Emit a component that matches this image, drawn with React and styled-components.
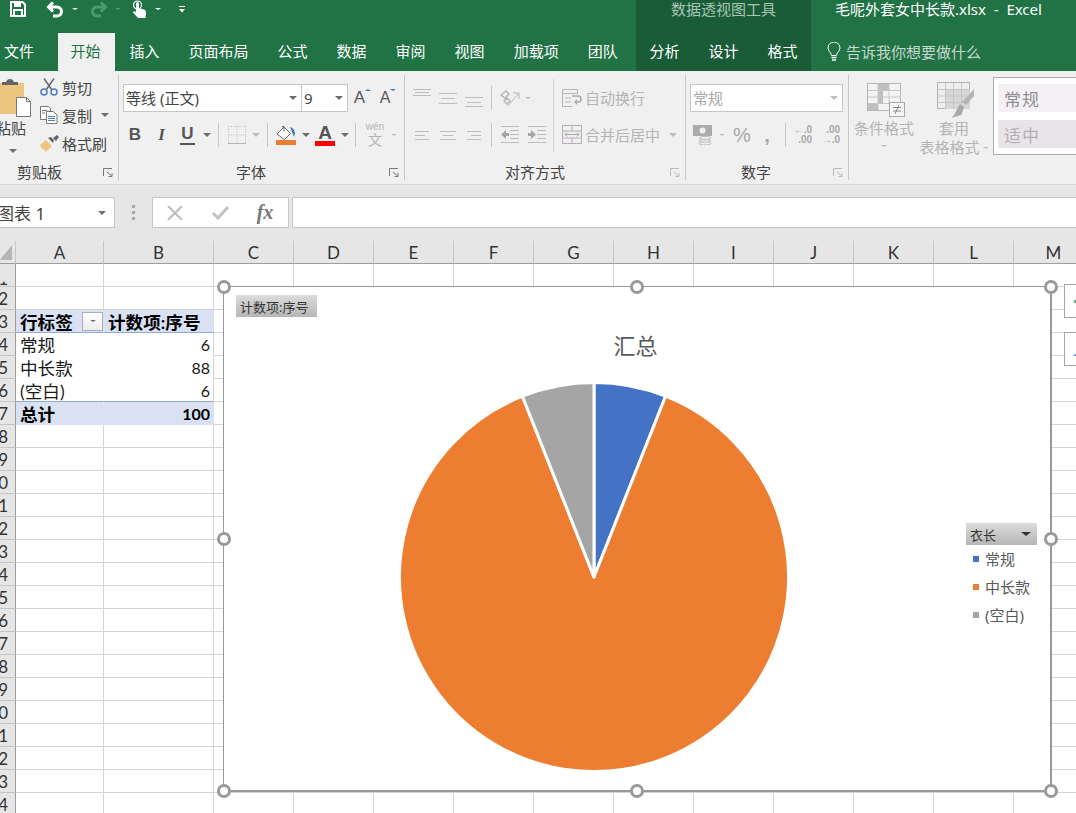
import React from 'react';
import styled, { createGlobalStyle } from 'styled-components';

const CJK = '"Noto Sans CJK SC", sans-serif';

const GlobalStyle = createGlobalStyle`
  html, body { margin: 0; padding: 0; background: #fff; }
  body { font-family: "Noto Sans", ${CJK}; }
  * { box-sizing: border-box; }
`;

const Page = styled.div`
  width: 1076px;
  height: 813px;
  overflow: hidden;
  display: flex;
  flex-direction: column;
  background: #e6e6e6;
`;

/* ---------- title bar + tabs ---------- */

const Header = styled.header`
  display: flex;
  height: 71px;
  flex: none;
  background: #217346;
  color: #fff;
`;

const HeaderLeft = styled.div`
  width: 636px;
  flex: none;
`;

const ContextBand = styled.div`
  width: 175px;
  flex: none;
  background: #1a5c38;
`;

const HeaderRight = styled.div`
  flex: 1;
  min-width: 0;
`;

const TopRow = styled.div`
  height: 33px;
  padding-bottom: 15px;
  display: flex;
  align-items: center;
  font-size: 15px;
  line-height: 18px;
  white-space: pre;
`;

const ContextLabel = styled(TopRow)`
  justify-content: center;
  color: #a9c5b5;
`;

const FileTitle = styled(TopRow)`
  padding-left: 24px;
`;

const Slot = styled.span`
  display: inline-flex;
  flex: none;
  align-items: center;
  justify-content: center;
  width: ${p => p.$w}px;
  margin-left: ${p => p.$ml || 0}px;
`;

const TabRow = styled.nav`
  height: 38px;
  display: flex;
  margin-left: ${p => p.$ml || 0}px;
`;

const Tab = styled.div`
  height: 38px;
  flex: none;
  padding: 0 14.5px 3px ${p => (p.$active ? 12.5 : 14.5)}px;
  display: flex;
  align-items: center;
  font-size: 15px;
  white-space: nowrap;
  color: ${p => (p.$active ? '#217346' : '#fff')};
  background: ${p => (p.$active ? '#f0f0f0' : 'transparent')};
`;

const FileTab = styled(Tab)`
  padding: 0 24px 3px 4px;
`;

const TellMe = styled.div`
  height: 38px;
  padding: 0 0 2px 16px;
  display: flex;
  align-items: center;
  gap: 5px;
  font-size: 15px;
  color: #c5d8cd;
`;

/* ---------- ribbon ---------- */

const Ribbon = styled.section`
  height: 114px;
  flex: none;
  display: flex;
  background: #f0f0f0;
  border-bottom: 1px solid #d6d6d6;
  color: #444;
  font-size: 15px;
  overflow: hidden;
`;

const Group = styled.div`
  width: ${p => p.$w}px;
  height: 105px;
  margin-top: 4px;
  flex: none;
  display: flex;
  flex-direction: column;
  border-right: 1px solid #c8c8c8;
`;

const GroupBody = styled.div`
  height: 89px;
  display: flex;
  padding-top: ${p => p.$top || 0}px;
`;

const GroupFooter = styled.div`
  height: 16px;
  display: flex;
  align-items: center;
  padding-left: ${p => p.$labelAt}px;
  padding-right: 5px;
  font-size: 15px;
  line-height: 16px;
  color: #444;
`;

const Launcher = styled.svg`
  width: 10px;
  height: 9px;
  margin-left: auto;
`;

const Stack = styled.div`
  display: flex;
  flex-direction: column;
  width: ${p => (p.$w ? `${p.$w}px` : 'auto')};
`;

const ToolRow = styled.div`
  height: 37px;
  display: flex;
  align-items: center;
  padding-left: ${p => p.$pad || 0}px;
`;

const Sep = styled.span`
  width: 1px;
  height: 24px;
  flex: none;
  background: #c6c6c6;
  margin-left: ${p => p.$ml}px;
  margin-right: ${p => p.$mr}px;
`;

const TallSep = styled.span`
  width: 1px;
  height: 73px;
  flex: none;
  background: #d2d2d2;
`;

const Caret = styled.span`
  display: inline-block;
  flex: none;
  width: 0;
  height: 0;
  border-left: ${p => p.$s || 4}px solid transparent;
  border-right: ${p => p.$s || 4}px solid transparent;
  border-top: ${p => (p.$s ? p.$s - 1 : 4)}px solid ${p => p.$c || '#6d6d6d'};
`;

const CaretUp = styled(Caret)`
  transform: rotate(180deg);
`;

const PasteColumn = styled.div`
  width: 36px;
  flex: none;
  overflow: hidden;
  display: flex;
  flex-direction: column;
  padding-top: 4px;
`;

const PasteLabel = styled.div`
  width: 30px;
  margin-left: -4px;
  line-height: 20px;
  white-space: nowrap;
`;

const PasteCaret = styled.div`
  padding-left: 9px;
  margin-top: 9px;
  line-height: 0;
`;

const ClipList = styled.div`
  display: flex;
  flex-direction: column;
  margin: -2px 0 0 4px;
`;

const ClipRow = styled.div`
  height: 28px;
  display: flex;
  align-items: center;
`;

const ClipIcon = styled.span`
  width: 22px;
  display: flex;
`;

const SelectBox = styled.div`
  width: ${p => p.$w}px;
  height: 28px;
  flex: none;
  display: flex;
  align-items: center;
  justify-content: space-between;
  padding: 0 ${p => p.$pr || 4}px 0 2px;
  background: #fff;
  border: 1px solid #c6c6c6;
  color: ${p => (p.$dim ? '#a6a6a6' : '#444')};
  font-size: 15px;
  white-space: nowrap;
  margin-left: ${p => p.$ml || 0}px;
`;

const SizeGlyph = styled.span`
  display: inline-flex;
  align-items: flex-start;
  font-family: "Liberation Sans", sans-serif;
  font-size: ${p => p.$size}px;
  line-height: 18px;
  color: #595959;
  gap: 0;
`;

const FormatLetter = styled.span`
  font-family: ${p => (p.$serif ? '"Liberation Serif"' : '"Liberation Sans"')}, serif;
  font-weight: 700;
  font-style: ${p => (p.$serif ? 'italic' : 'normal')};
  font-size: 17px;
  line-height: 18px;
  color: #555;
  border-bottom: ${p => (p.$under ? '2px solid #555' : 'none')};
  padding: 0 1px;
`;

const ColorStack = styled.span`
  display: flex;
  flex-direction: column;
  align-items: center;
  width: 20px;
`;

const ColorBar = styled.span`
  width: 20px;
  height: 5px;
  background: ${p => p.$c};
`;

const BigA = styled.span`
  font-family: "Liberation Sans", sans-serif;
  font-weight: 700;
  font-size: 19px;
  line-height: 17px;
  color: #555;
`;

const Phonetic = styled.span`
  display: flex;
  flex-direction: column;
  align-items: center;
  gap: 1px;
  color: #b5b5b5;
  line-height: 1;
`;

const PhoneticTop = styled.span`
  font-family: "Liberation Sans", sans-serif;
  font-size: 10px;
  line-height: 10px;
`;

const PhoneticBottom = styled.span`
  font-size: 14px;
  line-height: 14px;
`;

const DimLabel = styled.span`
  color: #b4b4b4;
  font-size: 15px;
  white-space: nowrap;
  margin-left: ${p => p.$ml || 0}px;
`;

const DimSymbol = styled.span`
  color: #a8a8a8;
  font-family: "Liberation Sans", sans-serif;
  font-weight: ${p => (p.$bold ? 700 : 400)};
  font-size: 20px;
  line-height: 20px;
`;

const DecimalStack = styled.span`
  display: flex;
  flex-direction: column;
  align-items: flex-end;
  color: #a8a8a8;
  font-family: "Liberation Sans", sans-serif;
  font-size: 10px;
  line-height: 10px;
  font-weight: 700;
`;

const StyleButton = styled.div`
  width: 70px;
  flex: none;
  display: flex;
  flex-direction: column;
  align-items: center;
  color: #b4b4b4;
  padding-top: 11px;
`;

const StyleIcon = styled.div`
  height: 36px;
  display: flex;
  align-items: flex-end;
  padding-left: ${p => p.$pl || 0}px;
`;

const StyleLine = styled.div`
  line-height: 19px;
  display: flex;
  align-items: center;
  gap: 3px;
  white-space: nowrap;
  margin-top: ${p => p.$mt || 0}px;
`;

const Gallery = styled.div`
  width: 100px;
  height: 78px;
  flex: none;
  margin: 6px 0 0 4px;
  padding: 6px 0 0 4px;
  display: flex;
  flex-direction: column;
  gap: 8px;
  background: #fff;
  border: 1px solid #ababab;
`;

const GalleryCell = styled.div`
  height: 28px;
  padding-left: 6px;
  display: flex;
  align-items: center;
  background: ${p => p.$bg};
  color: ${p => p.$c};
  font-size: 17px;
  letter-spacing: 1px;
`;

/* ---------- formula bar ---------- */

const FormulaBar = styled.div`
  height: 56px;
  flex: none;
  display: flex;
  padding: 12px 0 13px;
  background: #e6e6e6;
`;

const NameBox = styled.div`
  width: 115px;
  flex: none;
  display: flex;
  align-items: center;
  justify-content: space-between;
  padding-right: 8px;
  background: #fff;
  border: 1px solid #c6c6c6;
  border-left: none;
  color: #444;
  font-size: 17px;
  overflow: hidden;
`;

const NameText = styled.span`
  margin-left: -3px;
  white-space: nowrap;
`;

const Grip = styled.div`
  width: 37px;
  flex: none;
  display: flex;
  flex-direction: column;
  align-items: center;
  justify-content: center;
  gap: 3px;
`;

const GripDot = styled.span`
  width: 3px;
  height: 3px;
  background: #a8a8a8;
`;

const FxBox = styled.div`
  width: 137px;
  flex: none;
  display: flex;
  align-items: center;
  background: #fff;
  border: 1px solid #c6c6c6;
`;

const FxGlyph = styled.span`
  font-family: "Liberation Serif", serif;
  font-style: italic;
  font-weight: 700;
  font-size: 20px;
  color: #777;
`;

const FormulaInput = styled.div`
  flex: 1;
  margin-left: 3px;
  background: #fff;
  border: 1px solid #c6c6c6;
  border-right: none;
`;

/* ---------- sheet ---------- */

const Sheet = styled.main`
  position: relative;
  flex: 1;
  min-height: 0;
  overflow: hidden;
  background: #fff;
`;

const Grid = styled.div`
  display: grid;
  grid-template-columns: 16px 88px 110px repeat(11, 80px);
  grid-auto-rows: 23px;
  font-family: Lato, ${CJK};
  font-size: 17px;
  color: #1a1a1a;
`;

const Corner = styled.div`
  background: #e6e6e6;
  border-right: 1px solid #c6c6c6;
  border-bottom: 1px solid #9e9e9e;
  padding: 4px 0 0 0;
  display: flex;
  align-items: flex-start;
`;

const ColHead = styled.div`
  background: #e6e6e6;
  border-right: 1px solid #c6c6c6;
  border-bottom: 1px solid #9e9e9e;
  display: flex;
  align-items: center;
  justify-content: center;
  color: #333;
`;

const RowHead = styled.div`
  background: #e6e6e6;
  border-right: 1px solid #9e9e9e;
  border-bottom: 1px solid #c6c6c6;
  padding-right: 7px;
  display: flex;
  align-items: center;
  justify-content: flex-end;
  overflow: hidden;
  color: #333;
`;

const RowNumber = styled.span`
  ${p => p.$cut && 'transform: translateY(3px); clip-path: inset(68% 0 0 0);'}
`;

const Cell = styled.div`
  display: flex;
  align-items: center;
  justify-content: ${p => p.$justify || 'flex-start'};
  padding: 0 ${p => p.$pr || 4}px 0 4px;
  white-space: nowrap;
  background: ${p => p.$fill || '#fff'};
  font-size: ${p => (p.$number ? 16 : 17.6)}px;
  font-weight: ${p => (p.$bold ? 700 : 400)};
  color: ${p => (p.$bold ? '#000' : '#1a1a1a')};
  border-right: 1px solid ${p => (p.$plain ? 'transparent' : '#d4d4d4')};
  border-bottom: 1px solid ${p => p.$line || '#d4d4d4'};
`;

const FilterButton = styled.span`
  width: 21px;
  height: 19px;
  margin-right: -4px;
  display: flex;
  align-items: center;
  justify-content: center;
  background: linear-gradient(#fff, #ececec);
  border: 1px solid #adadad;
`;

/* ---------- chart ---------- */

const Chart = styled.div`
  position: absolute;
  left: 223px;
  top: 45px;
  width: 829px;
  height: 506px;
  background: #fff;
  border-style: solid;
  border-color: #999;
  border-width: 1px 2px 2px 1px;
`;

const Handle = styled.span`
  position: absolute;
  left: ${p => p.$x}%;
  top: ${p => p.$y}%;
  width: 14px;
  height: 14px;
  transform: translate(-50%, -50%);
  background: #fff;
  border: 3px solid #999;
  border-radius: 50%;
`;

const FieldButton = styled.div`
  height: 22px;
  display: flex;
  align-items: center;
  padding: 0 4px;
  font-size: 13px;
  color: #333;
  background: linear-gradient(#dcdcdc, #b6b6b6);
`;

const ValueField = styled(FieldButton)`
  position: absolute;
  left: 12px;
  top: 8px;
  width: 81px;
  white-space: nowrap;
`;

const ChartTitle = styled.div`
  position: absolute;
  left: 0;
  right: 3px;
  top: 42px;
  text-align: center;
  font-size: 22px;
  line-height: 32px;
  color: #595959;
`;

const PieSvg = styled.svg`
  position: absolute;
  left: 170px;
  top: 90px;
`;

const Legend = styled.div`
  position: absolute;
  left: 742px;
  top: 236px;
  width: 71px;
`;

const LegendField = styled(FieldButton)`
  justify-content: space-between;
  padding-right: 6px;
`;

const LegendItem = styled.div`
  height: 28px;
  display: flex;
  align-items: center;
  gap: 6px;
  padding-left: 7px;
  font-size: 15px;
  color: #595959;
  white-space: nowrap;
`;

const LegendLabel = styled.span`
  margin-top: -2px;
`;

const LegendMark = styled.span`
  width: 6px;
  height: 6px;
  flex: none;
  background: ${p => p.$c};
`;

const SideButton = styled.div`
  position: absolute;
  left: 1064px;
  top: ${p => p.$top}px;
  width: 40px;
  height: 34px;
  padding: 0 0 ${p => p.$low ? 9 : 0}px 8px;
  display: flex;
  align-items: ${p => (p.$low ? 'flex-end' : 'center')};
  background: #fff;
  border: 1px solid #a6a6a6;
`;

const SideMark = styled.span`
  width: 5px;
  height: 3px;
  margin-left: 1px;
  background: #6ea98a;
`;

/* ---------- icons ---------- */

const SaveIcon = () => (
  <svg width="16" height="16" viewBox="0 0 16 16">
    <path fill="#fff" fillRule="evenodd" d="M0 0h13l3 3v13H0zM2 2v12h1V8h10v6h1V4l-2-2h-1v4H4V2zM5 10v4h6v-4z" />
    <path fill="#fff" d="M8 2h2v3H8z" />
  </svg>
);

const UndoIcon = ({ color = '#fff', flip }) => (
  <svg width="18" height="17" viewBox="0 0 18 17" style={flip ? { transform: 'scaleX(-1)' } : undefined}>
    <path fill="none" stroke={color} strokeWidth="3" d="M7 1.5 L2.5 6 L7 10.5 M3 6 H11 a4.5 4.5 0 0 1 0 9 H7" />
  </svg>
);

const TouchIcon = () => (
  <svg width="15" height="19" viewBox="0 0 15 19">
    <circle cx="5.5" cy="5" r="4" fill="none" stroke="#fff" strokeWidth="1.2" />
    <path fill="#fff" d="M4 3.5a1.5 1.5 0 0 1 3 0V8l5 1.5q2 .6 2 2.5l-.5 6H6L1 12.5l1-1.5 2 1z" />
  </svg>
);

const CustomizeIcon = () => (
  <svg width="8" height="7" viewBox="0 0 8 7">
    <path d="M1 .5h6" stroke="#fff" />
    <path d="M1 3h6L4 6.5z" fill="#fff" />
  </svg>
);

const BulbIcon = () => (
  <svg width="14" height="19" viewBox="0 0 14 19">
    <path fill="none" stroke="#fff" d="M4.500 13.500C4 10 1 9 1 6a6 6 0 0 1 12 0c0 3-3 4-3.500 7.500z" />
    <path stroke="#fff" strokeWidth="1.500" d="M4.500 15.500h5M5 18h4" />
  </svg>
);

const PasteIcon = () => (
  <svg width="32" height="39" viewBox="0 0 32 39" style={{ flex: 'none' }}>
    <rect x="-4" y="4" width="28" height="31" fill="#ecc67f" />
    <path fill="#666" d="M2 6V3h4q1-3 4-3t4 3h4v3z" />
    <path fill="#fff" stroke="#777" d="M16.500 18.500h10l4 4v15h-14z" />
    <path fill="none" stroke="#777" d="M26.500 18.500v4h4" />
  </svg>
);

const ScissorsIcon = () => (
  <svg width="18" height="18" viewBox="0 0 18 18">
    <path stroke="#6a6a6a" strokeWidth="1.500" d="M4 0.500 12 12M14 .5 6 12" />
    <circle cx="4" cy="14" r="3" fill="none" stroke="#4a7ebb" strokeWidth="1.500" />
    <circle cx="14" cy="14" r="3" fill="none" stroke="#4a7ebb" strokeWidth="1.500" />
  </svg>
);

const CopyIcon = () => (
  <svg width="18" height="18" viewBox="0 0 18 18">
    <path fill="#fff" stroke="#777" d="M.500.500h8l2 2v11h-10z" />
    <path fill="#fff" stroke="#777" d="M6.500 5.500h7l3.500 3.500v8.500h-10.500z" />
    <path stroke="#4a7ebb" d="M8 10.500h7M8 12.500h7M8 14.500h7" />
    <path stroke="#777" d="M2 4.500h5M2 7h3" />
  </svg>
);

const BrushIcon = () => (
  <svg width="19" height="17" viewBox="0 0 19 17">
    <path fill="#ecc67f" d="M0 10l6-5 6 6-6 6q-1-2-3-3t-3-4z" />
    <path fill="#666" d="M8 3l3-1 3 3-1 3zM13 3l4-3 2 2-3 4z" />
  </svg>
);

const LauncherIcon = ({ dim }) => (
  <Launcher viewBox="0 0 10 9">
    <path fill="none" stroke={dim ? '#bbb' : '#777'} d="M.500 8V.500H9M4 4l4.500 4M9 5v3.500H5.500" />
  </Launcher>
);

const BorderIcon = () => (
  <svg width="18" height="18" viewBox="0 0 18 18">
    <path fill="none" stroke="#c4bac6" strokeDasharray="1 1.500" d="M.500.500h17M.500.500v17M17.500.500v17M9 .500v17M.500 9h17" />
    <path stroke="#b5b5b5" d="M0 17.500h18" />
  </svg>
);

const FillIcon = () => (
  <svg width="20" height="15" viewBox="0 0 20 15">
    <path fill="#fff" stroke="#666" d="M1 9l7-7 6.500 6.500-6 6z" />
    <path stroke="#666" fill="none" d="M6 1.500h2v5" />
    <path fill="#3f79b8" d="M14 2q4 1 5 6l-1 4-2-5z" />
  </svg>
);

const AlignLines = ({ lines, w = 18, h = 18, color = '#bdbdbd' }) => (
  <svg width={w} height={h} viewBox={`0 0 ${w} ${h}`}>
    {lines.map(([x1, x2, y]) => (
      <path key={y} stroke={color} d={`M${x1} ${y + 0.5}H${x2}`} />
    ))}
  </svg>
);

const OrientIcon = () => (
  <svg width="20" height="18" viewBox="0 0 20 18">
    <path fill="none" stroke="#b5b5b5" strokeWidth="1.500" d="M1 6l5-4 3 3-4 4zM4 12l3-3 3 3-3 3z" />
    <path fill="none" stroke="#b5b5b5" d="M8 17L18 5M13 4h6v6" />
  </svg>
);

const IndentIcon = ({ right }) => (
  <svg width="18" height="17" viewBox="0 0 18 17">
    <path stroke="#bdbdbd" d="M0 .500h18M9 4.500h9M9 8.500h9M9 12.500h9M0 16.500h18" />
    <path
      fill="#a6a6a6"
      d={right ? 'M0 7h3V4l5 4.500-5 4.500v-3H0z' : 'M8 7H5V4L0 8.500 5 13v-3h3z'}
    />
  </svg>
);

const WrapIcon = () => (
  <svg width="20" height="18" viewBox="0 0 20 18">
    <path fill="none" stroke="#b5b5b5" d="M.500.500h15v4h-15zM.500 4.500v13h10M3 9h6M3 13h6" />
    <path fill="none" stroke="#a8a8a8" strokeWidth="1.500" d="M13 13h3q3 0 3-3t-3-3H10" />
    <path fill="#a8a8a8" d="M15 10l-3 3 3 3z" />
  </svg>
);

const MergeIcon = () => (
  <svg width="20" height="19" viewBox="0 0 20 19">
    <path fill="none" stroke="#b5aeb8" d="M.500.500h19v18h-19zM.500 6h19M.500 13h19M10 .500V6M10 13v5.500" />
    <path fill="none" stroke="#a8a8a8" d="M3 9.500h14M5 7.500l-2 2 2 2M15 7.500l2 2-2 2" />
  </svg>
);

const MoneyIcon = () => (
  <svg width="20" height="20" viewBox="0 0 20 20">
    <rect x="0" y="0" width="19" height="11" fill="#ababab" />
    <circle cx="9.500" cy="5.500" r="3" fill="#f0f0f0" />
    <ellipse cx="12" cy="13" rx="6" ry="1.500" fill="#f0f0f0" stroke="#bbb" />
    <ellipse cx="12" cy="16" rx="6" ry="1.500" fill="#f0f0f0" stroke="#bbb" />
    <ellipse cx="12" cy="18.500" rx="6" ry="1.500" fill="#f0f0f0" stroke="#bbb" />
  </svg>
);

const CondFormatIcon = () => (
  <svg width="38" height="35" viewBox="0 0 38 35">
    <rect x=".5" y=".5" width="33" height="27" fill="#f5f2f6" stroke="#b5b5b5" />
    <path fill="#b9b9b9" d="M11 1h11v6h-6v6h-2v7h-3zM1 21h10v6H1zM11 13h5v8h-5z" opacity=".9" />
    <path stroke="#c6c6c6" d="M11 1v26M22 1v20M1 7.500h33M1 14h33M1 20.500h33" />
    <rect x="22.500" y="19.500" width="15" height="14" fill="#f5f5f5" stroke="#a8a8a8" />
    <path stroke="#888" d="M26 24.500h8M26 28h8M32 22l-4 9" />
  </svg>
);

const TableFormatIcon = () => (
  <svg width="38" height="36" viewBox="0 0 38 36">
    <rect x=".5" y=".5" width="32" height="26" fill="#f0eef0" stroke="#b5b5b5" />
    <rect x="9" y="7" width="24" height="20" fill="#d9d6d9" />
    <path stroke="#c6c6c6" d="M8.500 1v26M16.500 1v26M24.500 1v26M1 7.500h32M1 14h32M1 20.500h32" />
    <path fill="#b5b5b5" d="M37 7v7l-8 9-4-3z" />
    <path fill="#a8a8a8" d="M23 22l4 3q-2 7-3 8l-10 3q4-3 5-7z" />
  </svg>
);

const CrossIcon = () => (
  <svg width="16" height="14" viewBox="0 0 16 14">
    <path stroke="#bdbdbd" strokeWidth="2" d="M1 0l14 14M15 0 1 14" />
  </svg>
);

const CheckIcon = () => (
  <svg width="17" height="14" viewBox="0 0 17 14">
    <path fill="none" stroke="#c2c2c2" strokeWidth="3" d="M1 7l5 5L16 1" />
  </svg>
);

const CornerMark = () => (
  <svg width="12" height="15" viewBox="0 0 12 15">
    <path fill="#b5b5b5" d="M12 0v15H0z" />
  </svg>
);

const Pie = () => {
  const cx = 200;
  const cy = 200;
  const r = 194.5;
  const point = share => {
    const a = share * 2 * Math.PI;
    return `${(cx + r * Math.sin(a)).toFixed(1)} ${(cy - r * Math.cos(a)).toFixed(1)}`;
  };
  const slices = [
    { from: 0, to: 0.06, color: '#4472c4' },
    { from: 0.06, to: 0.94, color: '#ed7d31' },
    { from: 0.94, to: 1, color: '#a5a5a5' },
  ];
  return (
    <PieSvg width="400" height="400" viewBox="0 0 400 400">
      {slices.map(s => (
        <path
          key={s.color}
          fill={s.color}
          stroke="#fff"
          strokeWidth="3"
          strokeLinejoin="round"
          d={`M${cx} ${cy}L${point(s.from)}A${r} ${r} 0 ${s.to - s.from > 0.5 ? 1 : 0} 1 ${point(s.to)}Z`}
        />
      ))}
    </PieSvg>
  );
};

/* ---------- data ---------- */

const TABS = ['插入', '页面布局', '公式', '数据', '审阅', '视图', '加载项', '团队'];
const CONTEXT_TABS = ['分析', '设计', '格式'];
const COLUMNS = 'ABCDEFGHIJKLM'.split('');
const ROWS = Array.from({ length: 24 }, (_, i) => i + 1);
const LEGEND = [
  ['常规', '#4472c4'],
  ['中长款', '#ed7d31'],
  ['(空白)', '#a5a5a5'],
];
const HANDLES = [
  [0, 0], [50, 0], [100.1, 0],
  [0, 50], [100.1, 50],
  [0, 100.2], [50, 100.2], [100.1, 100.2],
];

const FILL = '#d9e1f2';
const EDGE = '#8ea9db';

const pivotCell = (row, col) => {
  if (col === 'A') {
    if (row === 3) {
      return {
        text: '行标签',
        props: { $fill: FILL, $bold: true, $plain: true, $line: EDGE, $justify: 'space-between' },
        filter: true,
      };
    }
    if (row === 4) return { text: '常规', props: { $plain: true, $line: 'transparent' } };
    if (row === 5) return { text: '中长款', props: { $plain: true, $line: 'transparent' } };
    if (row === 6) return { text: '(空白)', props: { $plain: true, $line: EDGE } };
    if (row === 7) return { text: '总计', props: { $fill: FILL, $bold: true, $plain: true, $line: FILL } };
  }
  if (col === 'B') {
    const right = { $justify: 'flex-end', $pr: 3, $number: true };
    if (row === 3) return { text: '计数项:序号', props: { $fill: FILL, $bold: true, $line: EDGE, $plain: true } };
    if (row === 4) return { text: '6', props: { ...right, $line: 'transparent' } };
    if (row === 5) return { text: '88', props: { ...right, $line: 'transparent' } };
    if (row === 6) return { text: '6', props: { ...right, $line: EDGE } };
    if (row === 7) return { text: '100', props: { ...right, $fill: FILL, $bold: true, $line: FILL, $plain: true } };
  }
  return { text: '', props: {} };
};

export default function App() {
  return (
    <Page>
      <GlobalStyle />

      <Header>
        <HeaderLeft>
          <TopRow>
            <Slot $w={20} $ml={8}><SaveIcon /></Slot>
            <Slot $w={22} $ml={16}><UndoIcon /></Slot>
            <Slot $w={10} $ml={4}><Caret $c="#fff" $s={3} /></Slot>
            <Slot $w={22} $ml={8}><UndoIcon color="#4c9a72" flip /></Slot>
            <Slot $w={10} $ml={3}><Caret $c="#4c9a72" $s={3} /></Slot>
            <Slot $w={18} $ml={7}><TouchIcon /></Slot>
            <Slot $w={10} $ml={5}><Caret $c="#fff" $s={3} /></Slot>
            <Slot $w={10} $ml={14}><CustomizeIcon /></Slot>
          </TopRow>
          <TabRow>
            <FileTab>文件</FileTab>
            <Tab $active>开始</Tab>
            {TABS.map(t => <Tab key={t}>{t}</Tab>)}
          </TabRow>
        </HeaderLeft>

        <ContextBand>
          <ContextLabel>数据透视图工具</ContextLabel>
          <TabRow $ml={-1}>
            {CONTEXT_TABS.map(t => <Tab key={t}>{t}</Tab>)}
          </TabRow>
        </ContextBand>

        <HeaderRight>
          <FileTitle>{'毛呢外套女中长款.xlsx  -  Excel'}</FileTitle>
          <TellMe>
            <BulbIcon />
            告诉我你想要做什么
          </TellMe>
        </HeaderRight>
      </Header>

      <Ribbon>
        <Group $w={119}>
          <GroupBody>
            <PasteColumn>
              <PasteIcon />
              <PasteLabel>粘贴</PasteLabel>
              <PasteCaret><Caret /></PasteCaret>
            </PasteColumn>
            <ClipList>
              <ClipRow>
                <ClipIcon><ScissorsIcon /></ClipIcon>
                剪切
              </ClipRow>
              <ClipRow>
                <ClipIcon><CopyIcon /></ClipIcon>
                复制
                <Slot $w={8} $ml={9}><Caret /></Slot>
              </ClipRow>
              <ClipRow>
                <ClipIcon><BrushIcon /></ClipIcon>
                格式刷
              </ClipRow>
            </ClipList>
          </GroupBody>
          <GroupFooter $labelAt={17}>
            剪贴板
            <LauncherIcon />
          </GroupFooter>
        </Group>

        <Group $w={286}>
          <GroupBody $top={4}>
            <Stack>
              <ToolRow $pad={4}>
                <SelectBox $w={179}>
                  等线 (正文)
                  <Caret />
                </SelectBox>
                <SelectBox $w={47} $ml={-1}>
                  9
                  <Caret />
                </SelectBox>
                <Slot $w={27} $ml={1}>
                  <SizeGlyph $size={17}>A<CaretUp $c="#3f79b8" $s={3} /></SizeGlyph>
                </Slot>
                <Slot $w={24}>
                  <SizeGlyph $size={16}>A<Caret $c="#3f79b8" $s={3} /></SizeGlyph>
                </Slot>
              </ToolRow>
              <ToolRow $pad={3}>
                <Slot $w={26}><FormatLetter>B</FormatLetter></Slot>
                <Slot $w={27}><FormatLetter $serif>I</FormatLetter></Slot>
                <Slot $w={25}><FormatLetter $under>U</FormatLetter></Slot>
                <Slot $w={14}><Caret /></Slot>
                <Sep $ml={4} $mr={4} />
                <Slot $w={27}><BorderIcon /></Slot>
                <Slot $w={12}><Caret $c="#bdbdbd" /></Slot>
                <Sep $ml={5} $mr={4} />
                <Slot $w={28}>
                  <ColorStack><FillIcon /><ColorBar $c="#ed7d31" /></ColorStack>
                </Slot>
                <Slot $w={11}><Caret /></Slot>
                <Slot $w={28}>
                  <ColorStack><BigA>A</BigA><ColorBar $c="#ff0000" /></ColorStack>
                </Slot>
                <Slot $w={11}><Caret /></Slot>
                <Sep $ml={5} $mr={4} />
                <Slot $w={30}>
                  <Phonetic>
                    <PhoneticTop>wén</PhoneticTop>
                    <PhoneticBottom>文</PhoneticBottom>
                  </Phonetic>
                </Slot>
                <Slot $w={7}><Caret $c="#bdbdbd" $s={3} /></Slot>
              </ToolRow>
            </Stack>
          </GroupBody>
          <GroupFooter $labelAt={117}>
            字体
            <LauncherIcon />
          </GroupFooter>
        </Group>

        <Group $w={281}>
          <GroupBody $top={4}>
            <Stack $w={148}>
              <ToolRow $pad={4}>
                <Slot $w={26}><AlignLines lines={[[0, 18, 0], [2, 16, 3], [0, 18, 6]]} /></Slot>
                <Slot $w={26}><AlignLines lines={[[0, 18, 4], [2, 16, 9], [0, 18, 14]]} /></Slot>
                <Slot $w={26}><AlignLines lines={[[0, 18, 8], [2, 16, 13], [0, 18, 17]]} /></Slot>
                <Sep $ml={4} $mr={4} />
                <Slot $w={28}><OrientIcon /></Slot>
                <Slot $w={8}><Caret $c="#bdbdbd" $s={3} /></Slot>
              </ToolRow>
              <ToolRow $pad={4}>
                <Slot $w={26}><AlignLines lines={[[2, 16, 5], [2, 12, 9], [2, 16, 13]]} /></Slot>
                <Slot $w={26}><AlignLines lines={[[1, 17, 5], [4, 14, 9], [1, 17, 13]]} /></Slot>
                <Slot $w={26}><AlignLines lines={[[2, 16, 5], [6, 16, 9], [2, 16, 13]]} /></Slot>
                <Sep $ml={4} $mr={4} />
                <Slot $w={27}><IndentIcon /></Slot>
                <Slot $w={27}><IndentIcon right /></Slot>
              </ToolRow>
            </Stack>
            <TallSep />
            <Stack>
              <ToolRow $pad={8}>
                <WrapIcon />
                <DimLabel $ml={3}>自动换行</DimLabel>
              </ToolRow>
              <ToolRow $pad={8}>
                <MergeIcon />
                <DimLabel $ml={3}>合并后居中</DimLabel>
                <Slot $w={8} $ml={9}><Caret $c="#bdbdbd" /></Slot>
              </ToolRow>
            </Stack>
          </GroupBody>
          <GroupFooter $labelAt={100}>
            对齐方式
            <LauncherIcon dim />
          </GroupFooter>
        </Group>

        <Group $w={163}>
          <GroupBody $top={4}>
            <Stack>
              <ToolRow $pad={4}>
                <SelectBox $w={153} $dim>
                  常规
                  <Caret $c="#bdbdbd" />
                </SelectBox>
              </ToolRow>
              <ToolRow $pad={4}>
                <Slot $w={26}><MoneyIcon /></Slot>
                <Slot $w={12}><Caret $c="#bdbdbd" $s={3} /></Slot>
                <Slot $w={28}><DimSymbol>%</DimSymbol></Slot>
                <Slot $w={22}><DimSymbol $bold>,</DimSymbol></Slot>
                <Sep $ml={7} $mr={4} />
                <Slot $w={26}><DecimalStack><span>←.0</span><span>.00</span></DecimalStack></Slot>
                <Slot $w={30}><DecimalStack><span>.00</span><span>→.0</span></DecimalStack></Slot>
              </ToolRow>
            </Stack>
          </GroupBody>
          <GroupFooter $labelAt={55}>
            数字
            <LauncherIcon dim />
          </GroupFooter>
        </Group>

        <GroupBody>
          <StyleButton>
            <StyleIcon $pl={3}><CondFormatIcon /></StyleIcon>
            <StyleLine $mt={1}>条件格式</StyleLine>
            <StyleLine $mt={7}><Caret $c="#bdbdbd" $s={3} /></StyleLine>
          </StyleButton>
          <StyleButton>
            <StyleIcon $pl={3}><TableFormatIcon /></StyleIcon>
            <StyleLine $mt={1}>套用</StyleLine>
            <StyleLine>表格格式<Caret $c="#bdbdbd" $s={3} /></StyleLine>
          </StyleButton>
          <Gallery>
            <GalleryCell $bg="#f4f0f6" $c="#8f8f8f">常规</GalleryCell>
            <GalleryCell $bg="#e9e4ea" $c="#b0b0b0">适中</GalleryCell>
          </Gallery>
        </GroupBody>
      </Ribbon>

      <FormulaBar>
        <NameBox>
          <NameText>图表 1</NameText>
          <Caret />
        </NameBox>
        <Grip>
          <GripDot />
          <GripDot />
          <GripDot />
        </Grip>
        <FxBox>
          <Slot $w={24} $ml={10}><CrossIcon /></Slot>
          <Slot $w={24} $ml={21}><CheckIcon /></Slot>
          <Slot $w={24} $ml={21}><FxGlyph>fx</FxGlyph></Slot>
        </FxBox>
        <FormulaInput />
      </FormulaBar>

      <Sheet>
        <Grid>
          <Corner><CornerMark /></Corner>
          {COLUMNS.map(c => <ColHead key={c}>{c}</ColHead>)}
          {ROWS.map(row => (
            <React.Fragment key={row}>
              <RowHead>
                <RowNumber $cut={row === 1}>{row}</RowNumber>
              </RowHead>
              {COLUMNS.map(col => {
                const cell = pivotCell(row, col);
                return (
                  <Cell key={col} {...cell.props}>
                    {cell.text}
                    {cell.filter && <FilterButton><Caret $s={3} /></FilterButton>}
                  </Cell>
                );
              })}
            </React.Fragment>
          ))}
        </Grid>

        <Chart>
          <ValueField>计数项:序号</ValueField>
          <ChartTitle>汇总</ChartTitle>
          <Pie />
          <Legend>
            <LegendField>
              衣长
              <Caret $c="#333" $s={5} />
            </LegendField>
            {LEGEND.map(([name, color]) => (
              <LegendItem key={name}>
                <LegendMark $c={color} />
                <LegendLabel>{name}</LegendLabel>
              </LegendItem>
            ))}
          </Legend>
          {HANDLES.map(([x, y]) => <Handle key={`${x}-${y}`} $x={x} $y={y} />)}
        </Chart>

        <SideButton $top={43}><SideMark /></SideButton>
        <SideButton $top={91} $low>
          <CaretUp $c="#3f79b8" $s={3} />
        </SideButton>
      </Sheet>
    </Page>
  );
}
